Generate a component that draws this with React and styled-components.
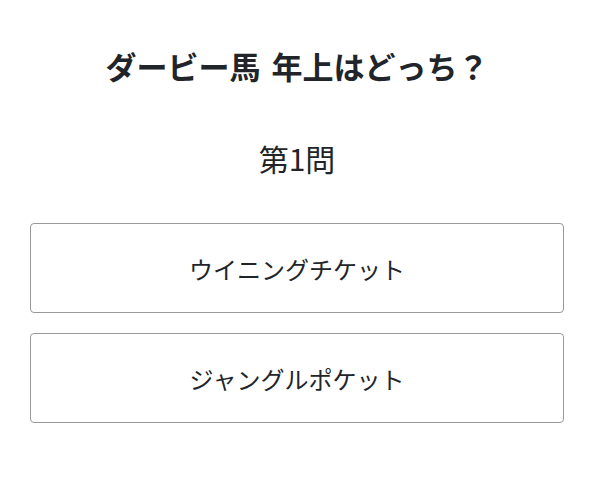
import React from "react";
import styled, { createGlobalStyle } from "styled-components";

const Global = createGlobalStyle`
  html, body { margin: 0; padding: 0; background: #fff; }
  body {
    font-family: "Noto Sans CJK JP", "Noto Sans", sans-serif;
    color: #212529;
  }
`;

const Page = styled.main`
  width: 534px;
  margin-left: 30px;
  padding-top: 38px;
  display: flex;
  flex-direction: column;
  align-items: center;
`;

const Title = styled.h1`
  margin: 0;
  font-size: 31px;
  font-weight: 700;
  line-height: 56px;
  text-align: center;
  word-spacing: 4px;
`;

const Question = styled.h2`
  margin: 44px 0 0;
  font-size: 30px;
  font-weight: 400;
  line-height: 40px;
  text-align: center;
`;

const Choices = styled.div`
  margin-top: 45px;
  width: 100%;
  display: flex;
  flex-direction: column;
  gap: 20px;
`;

const Choice = styled.button`
  width: 100%;
  height: 90px;
  background: #fff;
  border: 1px solid #999;
  border-radius: 4px;
  font-family: inherit;
  font-size: 24px;
  color: #212529;
  cursor: pointer;
`;

export default function App() {
  return (
    <>
      <Global />
      <Page>
        <Title>ダービー馬 年上はどっち？</Title>
        <Question>第1問</Question>
        <Choices>
          <Choice>ウイニングチケット</Choice>
          <Choice>ジャングルポケット</Choice>
        </Choices>
      </Page>
    </>
  );
}
